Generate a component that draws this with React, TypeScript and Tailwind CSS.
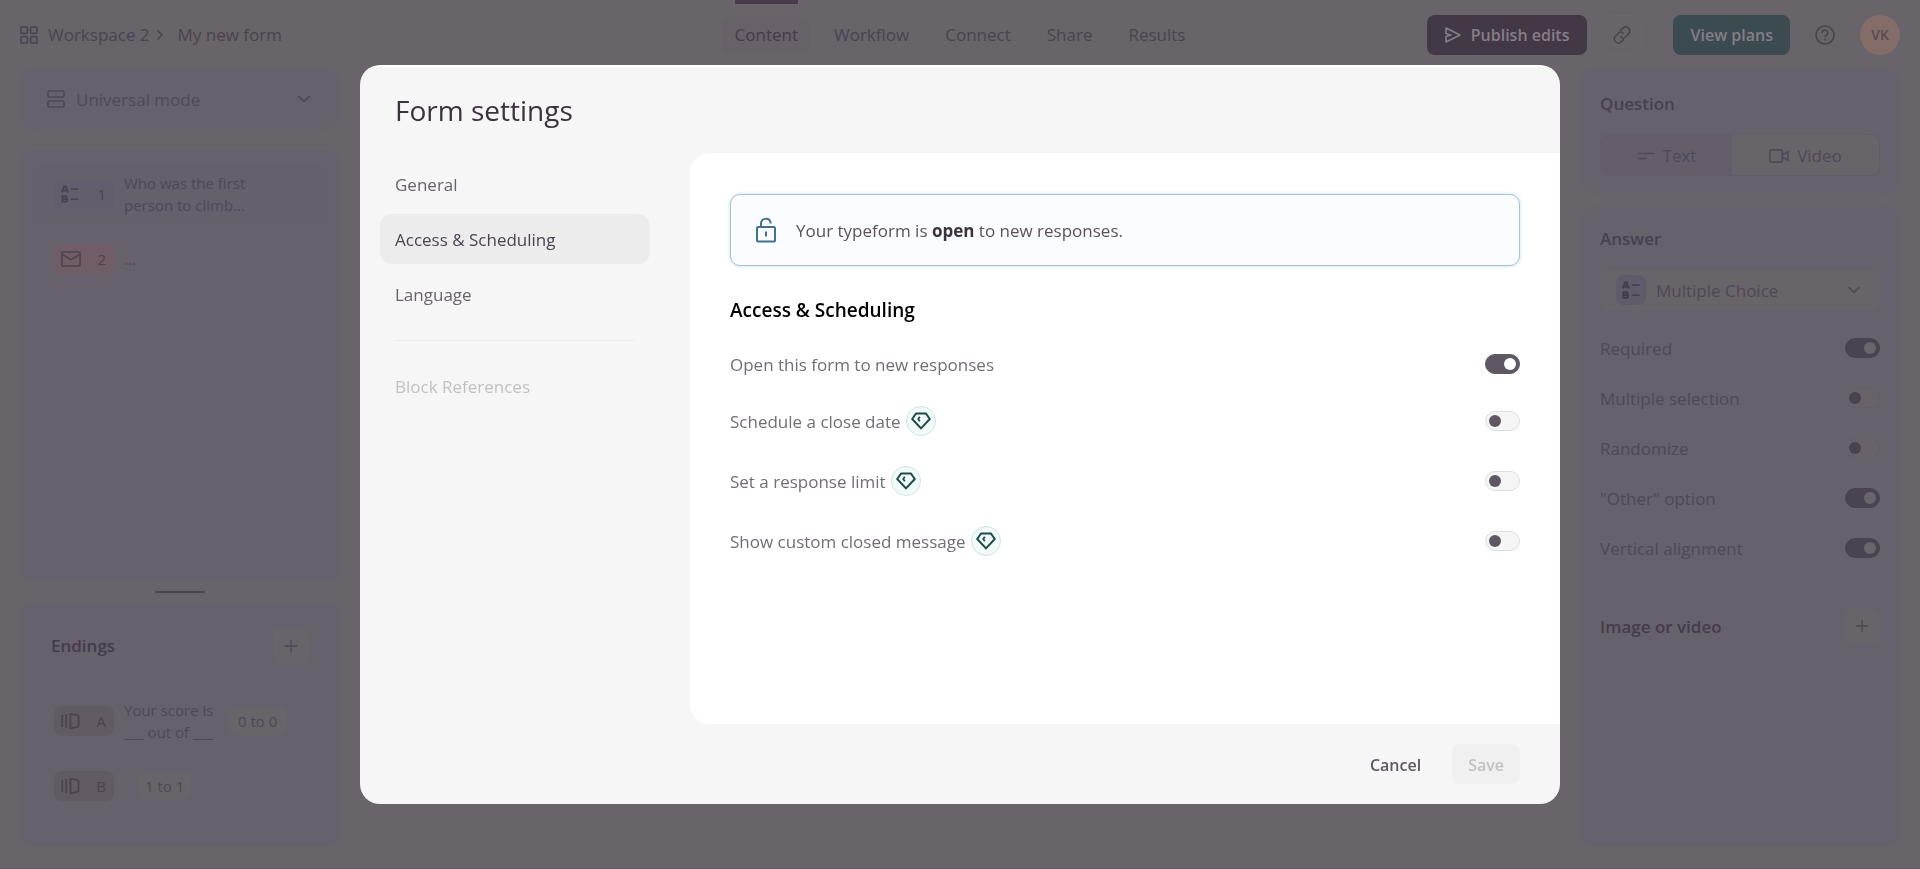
import { useState } from 'react';
import type { ReactNode } from 'react';
import { ChevronDown, ChevronRight, Plus } from 'lucide-react';

type IconProps = {
    className?: string;
};

type SwitchProps = {
    id: string;
    checked: boolean;
    onChange: () => void;
    dimmed?: boolean;
};

const NAV_LINKS = ['Content', 'Workflow', 'Connect', 'Share', 'Results'];

const QUESTION_OPTIONS = [
    { id: 'required', label: 'Required', on: true },
    { id: 'multiple', label: 'Multiple selection', on: false },
    { id: 'randomize', label: 'Randomize', on: false },
    { id: 'other', label: '"Other" option', on: true },
    { id: 'vertical', label: 'Vertical alignment', on: true },
];

const ACCESS_OPTIONS = [
    { id: 'open', label: 'Open this form to new responses', on: true, premium: false },
    { id: 'close-date', label: 'Schedule a close date', on: false, premium: true },
    { id: 'limit', label: 'Set a response limit', on: false, premium: true },
    { id: 'closed-message', label: 'Show custom closed message', on: false, premium: true },
];

function GridIcon() {
    return (
        <svg width="18" height="18" viewBox="0 0 18 18" fill="none" stroke="currentColor" strokeWidth="1.6">
            <rect x="1" y="1" width="6.4" height="6.4" rx="0.8" />
            <rect x="10.6" y="1" width="6.4" height="6.4" rx="0.8" />
            <rect x="1" y="10.6" width="6.4" height="6.4" rx="0.8" />
            <rect x="10.6" y="10.6" width="6.4" height="6.4" rx="0.8" />
        </svg>
    );
}

function RowsIcon() {
    return (
        <svg width="18" height="18" viewBox="0 0 18 18" fill="none" stroke="currentColor" strokeWidth="1.6">
            <rect x="1" y="1" width="16" height="6" rx="1" />
            <rect x="1" y="11" width="16" height="6" rx="1" />
        </svg>
    );
}

function ChoiceIcon() {
    return (
        <svg width="18" height="18" viewBox="0 0 18 18" fill="none" stroke="currentColor">
            <path d="M0.8 7.4L3.2 1.2H4.4L6.8 7.4M2 5.4H5.6" strokeWidth="2" />
            <path d="M1.4 11.2H4.2A1.3 1.3 0 0 1 4.2 13.9H1.4H4.6A1.4 1.4 0 0 1 4.6 16.8H1.4Z" strokeWidth="2" />
            <path d="M10 4H17.6M10 14.2H17.6" strokeWidth="1.6" />
        </svg>
    );
}

function MailIcon() {
    return (
        <svg width="20" height="16" viewBox="0 0 20 16" fill="none" stroke="currentColor" strokeWidth="1.6">
            <rect x="0.9" y="1" width="18.2" height="14" rx="1.4" />
            <path d="M1.4 3.4L8.6 7.9Q10 8.7 11.4 7.9L18.6 3.4" />
        </svg>
    );
}

function EndingIcon() {
    return (
        <svg width="19" height="18" viewBox="0 0 19 18" fill="none" stroke="currentColor" strokeWidth="1.8">
            <path d="M1.2 3V15M5.2 2V16" />
            <path d="M9.4 1.8L16.4 3.2Q17.6 3.4 17.6 4.6V13.4Q17.6 14.6 16.4 14.8L9.4 16.4Z" strokeLinejoin="round" />
        </svg>
    );
}

function SendIcon() {
    return (
        <svg width="16" height="16" viewBox="0 0 16 16" fill="none" stroke="currentColor" strokeWidth="1.6" strokeLinejoin="round">
            <path d="M1 1L15 8L1 15V9.6L6 8L1 6.4Z" />
        </svg>
    );
}

function LinkIcon() {
    return (
        <svg width="18" height="18" viewBox="0 0 18 18" fill="none" stroke="currentColor" strokeWidth="1.6" strokeLinecap="round">
            <path d="M7.6 4.4L9.6 2.4C11.6 0.4 14 0.6 15.6 2.2C17.2 3.8 17.2 6.2 15.6 7.8L12.6 10.8C11 12.4 9 12.2 7.8 10.8" />
            <path d="M10.4 13.6L8.4 15.6C6.4 17.6 4 17.4 2.4 15.8C0.8 14.2 0.8 11.8 2.4 10.2L5.4 7.2C7 5.6 9 5.8 10.2 7.2" />
        </svg>
    );
}

function HelpIcon() {
    return (
        <svg width="20" height="20" viewBox="0 0 20 20" fill="none" stroke="currentColor" strokeWidth="1.6">
            <circle cx="10" cy="10" r="9" />
            <path d="M7.2 8A2.8 2.8 0 1 1 11.2 10.4Q10 11 10 12.2" />
            <path d="M10 13.6V15.2" />
        </svg>
    );
}

function TextIcon() {
    return (
        <svg width="18" height="8" viewBox="0 0 18 8" stroke="currentColor" strokeWidth="1.6">
            <path d="M0.5 1.5H17.5M0.5 6.5H9.5" />
        </svg>
    );
}

function VideoIcon() {
    return (
        <svg width="20" height="14" viewBox="0 0 20 14" fill="none" stroke="currentColor" strokeWidth="1.6">
            <rect x="0.9" y="0.9" width="12.4" height="12.2" rx="1" />
            <path d="M13.6 5.6L18.8 2.8V11.2L13.6 8.4" />
        </svg>
    );
}

function UnlockIcon({ className }: IconProps) {
    return (
        <svg width="20" height="26" viewBox="0 0 20 26" fill="none" stroke="currentColor" strokeWidth="2" className={className}>
            <rect x="1" y="10" width="18" height="14.6" rx="1.2" />
            <path d="M5 10V6.4A4.9 4.9 0 0 1 14.6 5.4V6.6" />
            <path d="M10 14.6V19.6" />
        </svg>
    );
}

function DiamondIcon() {
    return (
        <svg width="20" height="18" viewBox="0 0 20 18" fill="none" stroke="currentColor" strokeWidth="2" strokeLinejoin="round">
            <path d="M5.2 1.4H14.8L18.8 7L10 16.4L1.2 7Z" />
            <path d="M8.8 4.8L7.2 7L8.8 9.2" strokeWidth="1.8" />
        </svg>
    );
}

function Switch({ id, checked, onChange, dimmed }: SwitchProps) {
    const base = 'relative h-5 w-[35px] shrink-0 cursor-pointer appearance-none rounded-full border before:absolute before:top-[3px] before:size-3 before:rounded-full';
    const bright = checked
        ? 'border-[#5f5762] bg-[#5f5762] before:right-[3px] before:bg-white'
        : 'border-[#dededf] bg-[#f5f5f5] before:left-[3px] before:bg-[#5f5762]';
    const dark = checked
        ? 'border-[#4c4350] bg-[#4c4350] before:right-[3px] before:bg-[#6a646b]'
        : 'border-[#655e69] bg-[#69626b] before:left-[3px] before:bg-[#4c4350]';
    return (
        <input
            id={id}
            type="checkbox"
            role="switch"
            checked={checked}
            onChange={onChange}
            className={`${base} ${dimmed ? dark : bright}`}
        />
    );
}

function Badge({ icon, mark, color }: { icon: ReactNode; mark: string; color: string }) {
    return (
        <span className={`flex h-[30px] w-[60px] shrink-0 items-center justify-between rounded-lg pr-2 pl-[7px] text-[15px] font-medium text-[#4c4350] ${color}`}>
            {icon}
            {mark}
        </span>
    );
}

function Header() {
    return (
        <header className="grid h-[69px] grid-cols-[1fr_auto_1fr] items-start px-5 text-[17px] font-medium text-[#4c4350]">
            <div className="flex h-[70px] items-center">
                <a href="#workspace" className="flex items-center gap-[10px]">
                    <GridIcon />
                    Workspace 2
                </a>
                <ChevronRight size={16} strokeWidth={2.5} className="ml-[2px]" />
                <a href="#form" className="ml-[10px]">My new form</a>
            </div>
            <nav className="flex h-[70px] gap-9">
                {NAV_LINKS.map((link, i) => (
                    <a key={link} href={`#${link.toLowerCase()}`} className="flex flex-col items-center">
                        <span className={`h-1 w-full ${i === 0 ? 'bg-[#463b4b]' : ''}`} />
                        <span className={`-mx-3 mt-[13px] rounded-lg px-3 leading-9 ${i === 0 ? 'bg-[#68616a] text-[#463b4b]' : ''}`}>
                            {link}
                        </span>
                    </a>
                ))}
            </nav>
            <div className="flex h-[70px] items-center justify-end">
                <button className="flex h-10 items-center gap-[10px] rounded-lg bg-[#433845] px-[18px] text-base font-semibold text-[#857e86]">
                    <SendIcon />
                    Publish edits
                </button>
                <button aria-label="Copy link" className="ml-[15px] flex size-10 items-center justify-center rounded-lg border border-[#6c666d]">
                    <LinkIcon />
                </button>
                <button className="ml-[31px] h-10 rounded-lg bg-[#3c4b50] px-[17px] text-base font-semibold text-[#857e86]">View plans</button>
                <button aria-label="Help" className="ml-[25px]">
                    <HelpIcon />
                </button>
                <button className="ml-[25px] size-10 rounded-full bg-[#846d68] text-sm font-semibold text-[#574a50]">VK</button>
            </div>
        </header>
    );
}

function LeftPanel() {
    return (
        <aside className="flex w-[320px] flex-col text-[#514856]">
            <div className="relative flex h-[60px] items-center rounded-2xl bg-[#67616c]">
                <span className="pointer-events-none absolute left-[27px]">
                    <RowsIcon />
                </span>
                <select aria-label="Mode" className="h-full w-full cursor-pointer appearance-none rounded-2xl pt-[2px] pl-14 text-[17px] text-[#524957]">
                    <option>Universal mode</option>
                </select>
                <ChevronDown size={20} className="pointer-events-none absolute right-[26px]" />
            </div>

            <div className="mt-[21px] flex-1 rounded-2xl bg-[#67616c] px-[13px] pt-[13px]">
                <div className="flex h-[62px] items-center gap-[10px] rounded-xl bg-[#665f6c] pl-[21px]">
                    <Badge icon={<ChoiceIcon />} mark="1" color="bg-[#645d6d]" />
                    <p className="w-[150px] text-[15px] leading-[22px]">Who was the first person to climb...</p>
                </div>
                <div className="mt-[3px] flex h-[62px] items-center gap-[10px] pl-[21px]">
                    <Badge icon={<MailIcon />} mark="2" color="bg-[#715d68]" />
                    <p className="text-[15px] leading-[22px]">...</p>
                </div>
            </div>

            <div className="flex h-[22px] items-center justify-center">
                <div className="h-[2px] w-[50px] rounded-full bg-[#4c4350]" />
            </div>

            <div className="h-[243px] rounded-2xl bg-[#67616c] px-[31px] pt-[25px]">
                <div className="flex items-center justify-between">
                    <h2 className="text-[17px] font-semibold text-[#463b4b]">Endings</h2>
                    <button aria-label="Add ending" className="flex size-9 items-center justify-center rounded-lg bg-[#69636a]">
                        <Plus size={20} strokeWidth={1.6} />
                    </button>
                </div>
                <div className="mt-[35px] flex h-[44px] items-center gap-[10px] pl-[3px]">
                    <Badge icon={<EndingIcon />} mark="A" color="bg-[#625b64]" />
                    <p className="w-[94px] text-[15px] leading-[22px]">Your score is ___ out of ___</p>
                    <span className="rounded-lg bg-[#69636a] px-[10px] text-[15px] leading-[28px] font-medium">0 to 0</span>
                </div>
                <div className="mt-[21px] flex h-[44px] items-center gap-6 pl-[3px]">
                    <Badge icon={<EndingIcon />} mark="B" color="bg-[#625b64]" />
                    <span className="rounded-lg bg-[#69636a] px-[7px] text-[15px] leading-[28px] font-medium">1 to 1</span>
                </div>
            </div>
        </aside>
    );
}

function RightPanel() {
    const [options, setOptions] = useState(QUESTION_OPTIONS);

    const toggle = (id: string) => {
        setOptions(options.map((o) => (o.id === id ? { ...o, on: !o.on } : o)));
    };

    return (
        <aside className="flex w-[320px] flex-col gap-[14px] text-[17px] text-[#514856]">
            <section className="h-[124px] rounded-2xl bg-[#67616c] px-5 pt-[23px]">
                <h2 className="leading-6 font-semibold text-[#4a404f]">Question</h2>
                <div className="mt-[18px] flex h-[42px] rounded-lg border border-[#645d69]">
                    <button className="flex w-[131px] items-center justify-center gap-2 rounded-l-lg bg-[#655e6a] pt-[2px]">
                        <TextIcon />
                        Text
                    </button>
                    <button className="flex flex-1 items-center justify-center gap-2 rounded-r-lg bg-[#69636a] pt-[2px]">
                        <VideoIcon />
                        Video
                    </button>
                </div>
            </section>

            <section className="flex-1 rounded-2xl bg-[#67616c] px-5 pt-5">
                <h2 className="leading-6 font-semibold text-[#4a404f]">Answer</h2>
                <div className="relative mt-[19px] flex h-10 items-center rounded-lg bg-[#69636a]">
                    <span className="pointer-events-none absolute left-4 flex size-[30px] items-center justify-center rounded-lg bg-[#605a6b] text-[#463b4b]">
                        <ChoiceIcon />
                    </span>
                    <select aria-label="Answer type" className="h-full w-full cursor-pointer appearance-none pt-[2px] pl-14">
                        <option>Multiple Choice</option>
                    </select>
                    <ChevronDown size={20} className="pointer-events-none absolute right-4" />
                </div>
                <div className="mt-[13px]">
                    {options.map((o) => (
                        <div key={o.id} className="flex h-[50px] items-center justify-between">
                            <label htmlFor={o.id} className="pt-[2px]">{o.label}</label>
                            <Switch id={o.id} checked={o.on} onChange={() => toggle(o.id)} dimmed />
                        </div>
                    ))}
                </div>
                <div className="mt-[35px] flex items-center justify-between">
                    <h2 className="pt-[2px] font-semibold text-[#463b4b]">Image or video</h2>
                    <button aria-label="Add image or video" className="flex size-9 items-center justify-center rounded-lg bg-[#69636a]">
                        <Plus size={20} strokeWidth={1.6} />
                    </button>
                </div>
            </section>
        </aside>
    );
}

function SettingsDialog() {
    const [options, setOptions] = useState(ACCESS_OPTIONS);

    const toggle = (id: string) => {
        setOptions(options.map((o) => (o.id === id ? { ...o, on: !o.on } : o)));
    };

    return (
        <div className="fixed inset-0 flex items-center justify-center">
            <div
                role="dialog"
                aria-labelledby="dialog-title"
                className="flex h-[85vh] w-full max-w-[1200px] flex-col overflow-hidden rounded-[20px] border-t-2 border-white bg-[#f6f6f6] text-[17px]"
            >
                <h1 id="dialog-title" className="h-[86px] shrink-0 px-[35px] text-[28px] leading-[86px] text-[#3c323e]">
                    Form settings
                </h1>

                <div className="flex min-h-0 flex-1">
                    <nav className="w-[330px] shrink-0 px-5 pt-[6px] pr-10 text-[#6a636c]">
                        <a href="#general" className="block rounded-xl px-[15px] pt-[2px] leading-[48px]">General</a>
                        <a href="#access" className="mt-[5px] block rounded-xl bg-[#ececec] px-[15px] pt-[2px] leading-[48px] text-[#4c4350]">
                            Access &amp; Scheduling
                        </a>
                        <a href="#language" className="mt-[5px] block rounded-xl px-[15px] pt-[2px] leading-[48px]">Language</a>
                        <hr className="mx-[15px] mt-[21px] border-[#ededed]" />
                        <a href="#references" className="mt-5 block px-[15px] pt-[2px] leading-[48px] text-[#c2c0c3]">Block References</a>
                    </nav>

                    <main className="flex-1 overflow-auto rounded-l-[20px] bg-white px-10 pt-[41px]">
                        <div className="flex h-[72px] items-center gap-5 rounded-[10px] border border-[#a9c3d3] bg-[#fafcff] px-[25px] text-[#5a515d] shadow-[0_0_3px_1px_#dcebf4]">
                            <UnlockIcon className="text-[#42708f]" />
                            <p className="pt-[2px]">
                                Your typeform is <strong className="font-bold text-[#3c323e]">open</strong> to new responses.
                            </p>
                        </div>

                        <h2 className="mt-[30px] text-[19px] leading-7 font-semibold text-black">Access &amp; Scheduling</h2>

                        <div className="mt-[13px]">
                            {options.map((o) => (
                                <div key={o.id} className="flex h-[60px] items-center justify-between first:h-[54px]">
                                    <div className="flex items-center gap-[5px]">
                                        <label htmlFor={o.id} className="pt-[2px] text-[#736d75]">{o.label}</label>
                                        {o.premium && (
                                            <span className="flex size-[30px] items-center justify-center rounded-full border border-[#cfe6e3] bg-[#effaf9] text-[#1f4d45]">
                                                <DiamondIcon />
                                            </span>
                                        )}
                                    </div>
                                    <Switch id={o.id} checked={o.on} onChange={() => toggle(o.id)} />
                                </div>
                            ))}
                        </div>
                    </main>
                </div>

                <footer className="flex h-20 shrink-0 items-center justify-end gap-4 px-10 text-base font-semibold">
                    <button className="h-10 px-[15px] pt-[2px] text-[#5f5762]">Cancel</button>
                    <button disabled className="h-10 rounded-lg bg-[#f0f0f0] px-4 pt-[2px] text-[#c2c0c3]">Save</button>
                </footer>
            </div>
        </div>
    );
}

export default function App() {
    return (
        <div className="flex min-h-screen flex-col border-b border-[#5f5960] bg-[#69636a] font-['Open_Sans','Noto_Sans',sans-serif]">
            <Header />
            <div className="flex flex-1 justify-between px-5 pb-[22px]">
                <LeftPanel />
                <RightPanel />
            </div>
            <SettingsDialog />
        </div>
    );
}
